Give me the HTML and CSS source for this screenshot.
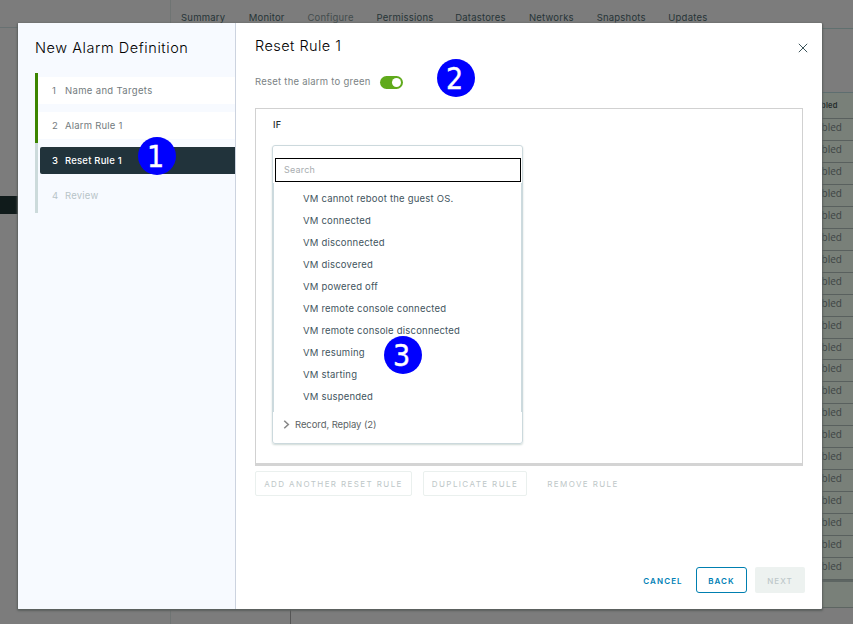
FILE: index.html
```html
<!DOCTYPE html>
<html lang="en">
<head>
<meta charset="utf-8">
<title>New Alarm Definition</title>
<link rel="stylesheet" href="styles.css">
</head>
<body>
<div class="app">
  <aside class="tree"><div class="tree-head"></div><div class="tree-selected"></div></aside>
  <main class="content">
    <nav class="tabs">
      <span>Summary</span><span>Monitor</span><span class="current">Configure</span><span>Permissions</span><span>Datastores</span><span>Networks</span><span>Snapshots</span><span>Updates</span>
    </nav>
    <div class="table">
      <div class="th">bled</div>
      <div class="rows">
        <div>abled</div><div>abled</div><div>abled</div><div>abled</div><div>abled</div><div>abled</div><div>abled</div>
        <div>abled</div><div>abled</div><div>abled</div><div>abled</div><div>abled</div><div>abled</div><div>abled</div>
        <div>abled</div><div>abled</div><div>abled</div><div>abled</div><div>abled</div><div>abled</div><div>abled</div>
      </div>
      <div class="tfoot"></div>
    </div>
    <div class="split"></div>
  </main>
</div>

<div class="modal" role="dialog">
  <aside class="steps">
    <h1>New Alarm Definition</h1>
    <ol>
      <li class="done"><div class="step"><b>1</b><span class="s1">Name and Targets</span></div></li>
      <li class="done"><div class="step"><b>2</b><span class="s2">Alarm Rule 1</span></div></li>
      <li class="active"><div class="step"><b>3</b><span class="s3">Reset Rule 1</span></div></li>
      <li class="todo"><div class="step"><b>4</b><span class="s4">Review</span></div></li>
    </ol>
  </aside>
  <section class="page">
    <header>
      <h2>Reset Rule 1</h2>
      <svg class="close" viewBox="0 0 10 10"><path d="M.8 .8 9.2 9.2M9.2 .8 .8 9.2"/></svg>
    </header>
    <div class="toggle-row"><span>Reset the alarm to green</span><i class="toggle"></i></div>
    <div class="rule">
      <div class="if">IF</div>
      <div class="picker">
        <div class="search">Search</div>
        <ul>
          <li>VM cannot reboot the guest OS.</li>
          <li>VM connected</li>
          <li>VM disconnected</li>
          <li>VM discovered</li>
          <li>VM powered off</li>
          <li>VM remote console connected</li>
          <li>VM remote console disconnected</li>
          <li>VM resuming</li>
          <li>VM starting</li>
          <li>VM suspended</li>
        </ul>
        <div class="group"><svg viewBox="0 0 6 8"><path d="M1 .7 4.6 4 1 7.3"/></svg><span>Record, Replay (2)</span></div>
      </div>
    </div>
    <div class="rule-actions">
      <button class="add" disabled>ADD ANOTHER RESET RULE</button>
      <button class="dup" disabled>DUPLICATE RULE</button>
      <button class="remove" disabled>REMOVE RULE</button>
    </div>
    <footer>
      <button class="cancel">CANCEL</button>
      <button class="back">BACK</button>
      <button class="next" disabled>NEXT</button>
    </footer>
  </section>
</div>

<div class="badge one">1</div>
<div class="badge two">2</div>
<div class="badge three">3</div>
</body>
</html>
```
FILE: styles.css
```css
* { box-sizing: border-box; }
body { margin: 0; width: 853px; height: 624px; overflow: hidden; position: relative; font-family: Inter, sans-serif; font-size: 9.5px; letter-spacing: .21px; color: #3f5560; }
h1, h2, ol, ul { margin: 0; padding: 0; list-style: none; font-weight: 400; }

.app { display: flex; height: 624px; background: #7c7c7c; }
.tree { width: 170px; flex: none; }
.tree-head { height: 28px; border-bottom: 1px solid #687172; }
.tree-selected { height: 18px; margin-top: 168px; background: #101b1b; }
.content { flex: 1; display: flex; flex-direction: column; border-left: 1px solid #6f7473; }
.tabs { flex: none; height: 29px; display: flex; gap: 22.7px; padding: 11px 0 0 10px; line-height: 14px; color: #263437; border-bottom: 1px solid #60706f; white-space: nowrap; }
.tabs .current { color: #434c4d; }
.tabs span:nth-child(1) { width: 45px; }
.tabs span:nth-child(2) { width: 36px; }
.tabs span:nth-child(3) { width: 46.5px; }
.tabs span:nth-child(4) { width: 56px; }
.tabs span:nth-child(5) { width: 51px; }
.tabs span:nth-child(6) { width: 45px; }
.tabs span:nth-child(7) { width: 49px; }
.table { align-self: flex-end; width: 40px; margin-top: 63px; border-top: 1px solid #5e6e70; background: #798079; color: #3d4444; }
.th { height: 26px; line-height: 25px; padding-left: 8px; font-size: 7.5px; font-weight: 600; color: #252c2c; border-bottom: 1px solid #59605e; }
.rows { height: 461px; display: grid; grid-template-rows: repeat(21, 1fr); }
.rows div { padding-left: 3px; line-height: 17px; border-bottom: 1px solid #59605e; font-family: "Open Sans", sans-serif; font-size: 10px; letter-spacing: 0; }
.tfoot { height: 28px; border-top: 2px solid #5d6562; border-bottom: 1px solid #5d6562; }
.split { width: 1px; height: 16px; margin: 0 0 0 119px; background: #555; }

.modal { position: absolute; left: 18px; top: 23px; width: 804px; height: 586px; display: flex; background: #fff; border-radius: 1px; box-shadow: 0 1px 2px 1px #5b605e; overflow: hidden; }
.steps { width: 218px; flex: none; background: #f7faff; border-right: 1px solid #ccd3df; padding-left: 17px; }
.steps h1 { height: 50px; padding-top: 15px; font-size: 14.5px; line-height: 20px; font-weight: 300; color: #000; letter-spacing: .56px; white-space: nowrap; }
.steps li { height: 35px; padding: 4px 0; border-left: 3px solid #ccdadb; }
.steps .done { border-color: #3c8500; }
.step { height: 27px; display: flex; align-items: center; background: #fff; color: #737b7e; padding-left: 14px; }
.step b { width: 13px; font-weight: 400; }
.step .s1 { letter-spacing: .34px; }
.active .step { margin-left: 2px; padding-left: 12px; background: #21333b; color: #fff; border-radius: 2px 0 0 2px; }
.active .step b, .active .step span { font-weight: 500; }
.todo .step { background: none; color: #b7c4c8; }

.page { flex: 1; display: flex; flex-direction: column; padding: 0 17px 16px 19px; }
.page header { flex: none; height: 50px; display: flex; justify-content: space-between; padding-top: 13px; }
.page h2 { font-size: 14.5px; line-height: 20px; font-weight: 300; color: #000; letter-spacing: .45px; }
.close { width: 10px; height: 10px; margin: 7px -3px 0 0; stroke: #3c545b; stroke-width: 1; fill: none; }
.toggle-row { flex: none; height: 35px; display: flex; align-items: flex-start; gap: 9px; line-height: 18px; color: #7b8385; letter-spacing: .24px; }
.toggle-row span { width: 116px; white-space: nowrap; }
.toggle { width: 23px; height: 13px; margin-top: 3px; border-radius: 7px; background: #60aa1c; display: flex; justify-content: flex-end; padding: 2px; }
.toggle::after { content: ""; width: 9px; height: 9px; border-radius: 50%; background: #fff; }
.rule { flex: none; width: 548px; height: 358px; border: 1px solid #d1d1d1; border-bottom: 3px solid #d4d4d4; padding: 10px 16px; }
.if { height: 26px; line-height: 12px; font-size: 9px; font-weight: 500; color: #21292b; padding-left: 1px; }
.picker { width: 251px; height: 299px; border: 1px solid #ccd9dd; border-radius: 3px; box-shadow: 0 1px 2px #cfd9d6; padding: 12px 1px 0; }
.search { height: 24px; margin: 0 0 1px 1px; border: 1px solid #000; line-height: 22px; padding-left: 8px; font-size: 9px; color: #a8adaf; }
.picker ul { height: 229px; margin: 0 -1px; padding: 5px 0 0 29px; border: solid #ccdade; border-width: 0 1px; }
.picker li { height: 22px; line-height: 22px; white-space: nowrap; }
.group { display: flex; align-items: center; height: 25px; padding-left: 9px; gap: 5px; color: #5c6365; letter-spacing: -.08px; }
.group svg { width: 7px; height: 9px; fill: none; stroke: #888; stroke-width: 1.4; }
.rule-actions { flex: none; display: flex; gap: 11px; margin-top: 5px; }
button { font: 500 8px/11px Inter, sans-serif; padding: 1px 0 0; height: 25px; border: 1px solid transparent; border-radius: 2px; background: none; letter-spacing: 1.08px; white-space: nowrap; }
.rule-actions button { color: #bec7c8; border-color: #eaf0ee; letter-spacing: 1.4px; font-weight: 400; }
.add { width: 157px; }
.dup { width: 104px; }
.rule-actions .remove { width: 90px; border-color: transparent; }
footer { display: flex; justify-content: flex-end; margin-top: auto; }
footer button { height: 26px; padding-top: 2px; color: #007fb5; font-weight: 600; }
.cancel { width: 54px; margin-right: 6px; }
.back { width: 51px; margin-right: 8px; border-color: #007fb0; border-radius: 3px; }
.next { width: 50px; background: #edf2f0; color: #bdc8ca; font-weight: 500; }

.badge { position: absolute; width: 38px; height: 38px; padding: 1px 3px 0 0; border-radius: 50%; background: #0000fe; color: #fff; font: 30px/38px "DejaVu Sans Condensed", "DejaVu Sans", sans-serif; font-stretch: condensed; letter-spacing: 0; text-align: center; -webkit-text-stroke: .4px #fff; }
.one { left: 138px; top: 137px; }
.two { left: 437px; top: 59px; }
.three { left: 384px; top: 336px; }
```
